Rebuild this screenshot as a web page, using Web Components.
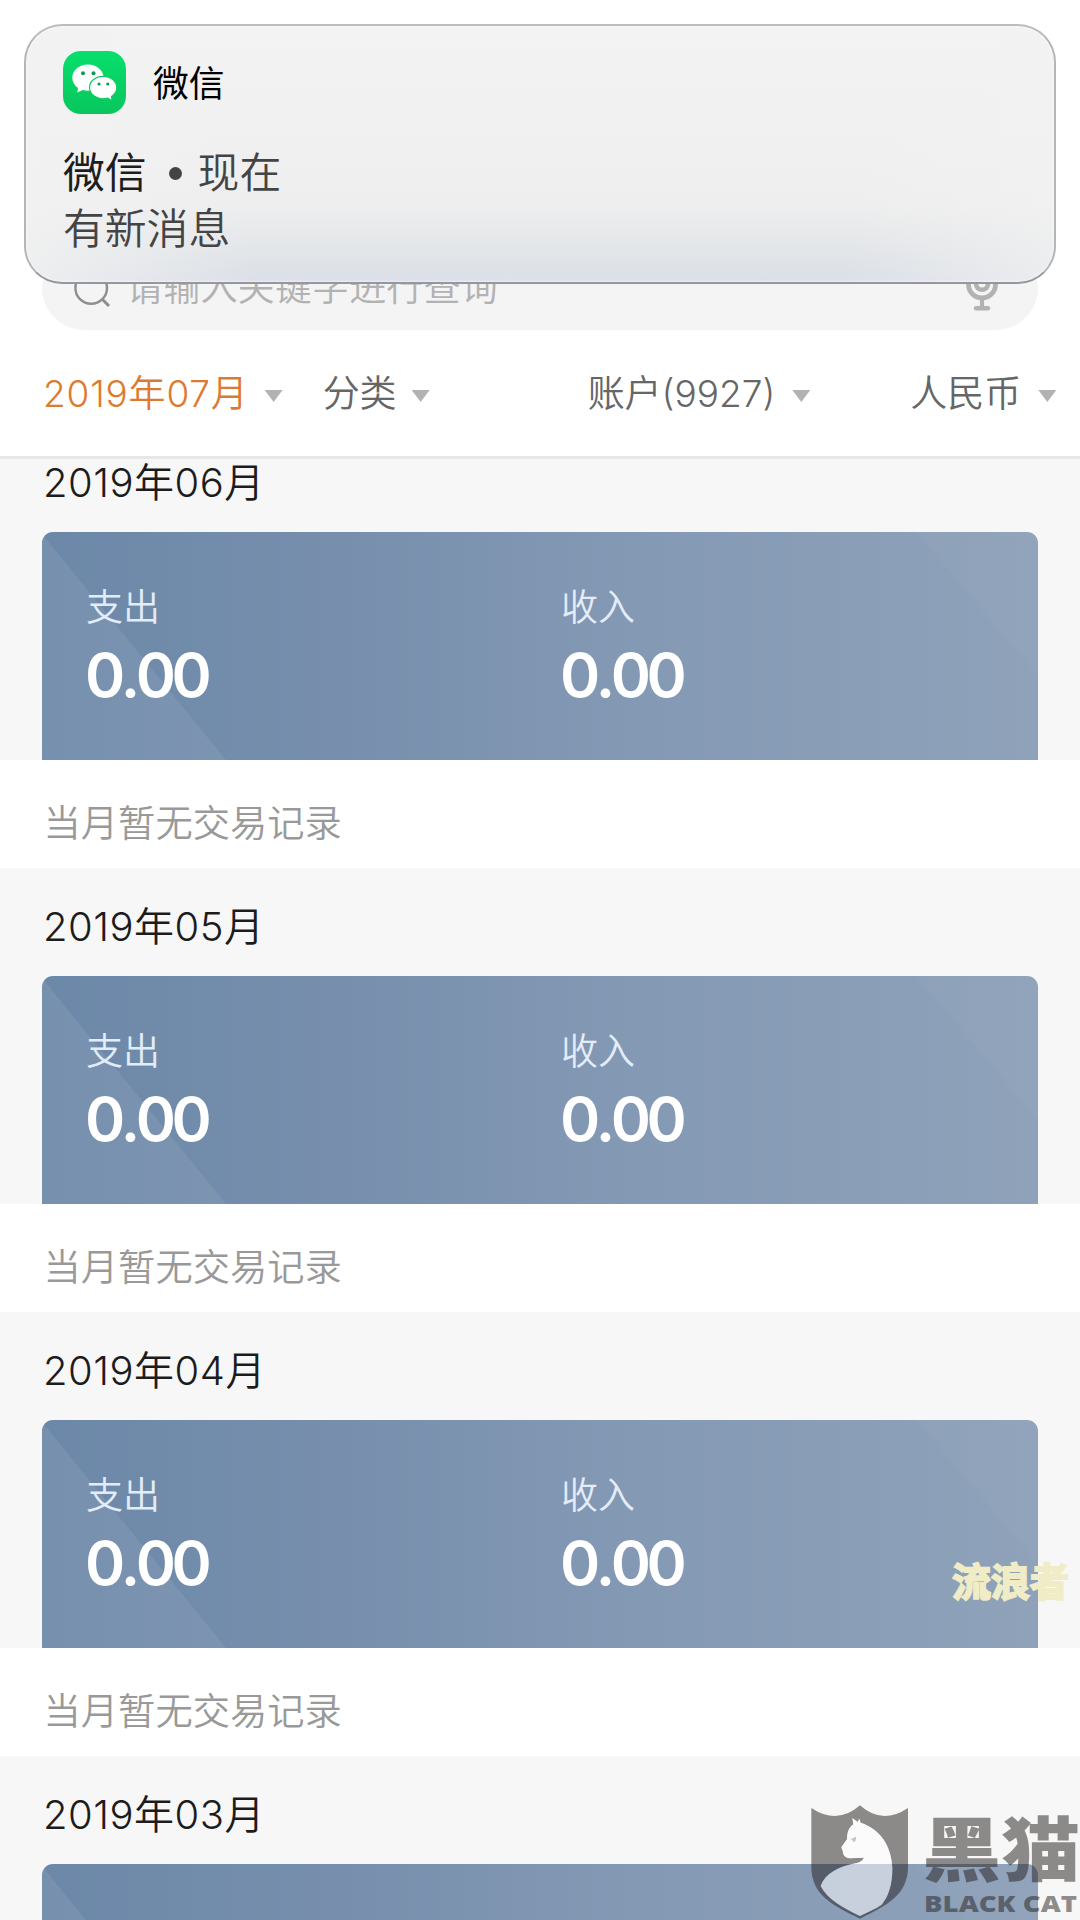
<!DOCTYPE html>
<html lang="zh-CN">
<head>
<meta charset="UTF-8">
<title>交易明细</title>
<style>
  body {
    margin: 0;
    width: 1080px;
    height: 1920px;
    overflow: hidden;
    background: #fff;
    font-family: Inter, "Noto Sans CJK SC", sans-serif;
    font-weight: 350;
  }
</style>
</head>
<body>
<bill-page>
  <search-bar slot="header" placeholder="请输入关键字进行查询"></search-bar>
  <filter-bar slot="header">
    <filter-item active style="margin-left: 43px; --gap: 16px">2019年07月</filter-item>
    <filter-item style="margin-left: 40px; --gap: 15px">分类</filter-item>
    <filter-item style="margin-left: 158px; --gap: 17px">账户(9927)</filter-item>
    <filter-item style="margin-left: 100px; --gap: 17px">人民币</filter-item>
  </filter-bar>
  <month-section first month="2019年06月" expense="0.00" income="0.00"></month-section>
  <month-section month="2019年05月" expense="0.00" income="0.00"></month-section>
  <month-section month="2019年04月" expense="0.00" income="0.00"></month-section>
  <month-section month="2019年03月"></month-section>
</bill-page>
<push-notice app="微信" time="现在">有新消息</push-notice>
<user-mark>流浪者</user-mark>
<black-cat-mark></black-cat-mark>

<script>
class BillPage extends HTMLElement {
  constructor() {
    super();
    this.attachShadow({ mode: 'open' });
    this.shadowRoot.innerHTML = `
      <style>
        :host {
          display: flex;
          flex-direction: column;
          height: 1920px;
          overflow: hidden;
        }
        header {
          flex: none;
          box-sizing: border-box;
          height: 459px;
          padding-top: 246px;
          border-bottom: 3px solid #e6e6e6;
          background: #fff;
        }
        main {
          flex: 1;
          min-height: 0;
          overflow: hidden;
        }
      </style>
      <header><slot name="header"></slot></header>
      <main><slot></slot></main>
    `;
  }
}

class SearchBar extends HTMLElement {
  constructor() {
    super();
    this.attachShadow({ mode: 'open' });
  }

  connectedCallback() {
    this.shadowRoot.innerHTML = `
      <style>
        :host {
          display: flex;
          align-items: center;
          box-sizing: border-box;
          height: 84px;
          margin: 0 42px;
          padding: 0 39px 0 31px;
          border-radius: 42px;
          background: #f4f4f4;
          color: #b2b2b2;
          font-size: 37.2px;
          line-height: 84px;
        }
        span {
          flex: 1;
          margin-left: 15px;
        }
        svg {
          display: block;
        }
      </style>
      <svg width="38" height="38" viewBox="0 0 38 38" fill="none" stroke="#8e8e8e" stroke-width="2.4">
        <circle cx="18.2" cy="19" r="15.800"/>
        <path d="M29.5 30.5L36 37" stroke-width="3"/>
      </svg>
      <span>${this.getAttribute('placeholder')}</span>
      <svg width="34" height="52" viewBox="0 0 34 52" fill="none" stroke="#b2b2b2">
        <rect x="11" y="2" width="12" height="25.800" rx="6" stroke-width="4.600"/>
        <path d="M3.500 18v4.500a13.500 13.500 0 0 0 27 0v-4.500" stroke-width="4.800"/>
        <path d="M17 38v7" stroke-width="4.200"/>
        <path d="M11 46.200h12" stroke-width="4.400" stroke-linecap="round"/>
      </svg>
    `;
  }
}

class FilterBar extends HTMLElement {
  constructor() {
    super();
    this.attachShadow({ mode: 'open' });
    this.shadowRoot.innerHTML = `
      <style>
        :host {
          display: flex;
          align-items: center;
          height: 128px;
        }
      </style>
      <slot></slot>
    `;
  }
}

class FilterItem extends HTMLElement {
  constructor() {
    super();
    this.attachShadow({ mode: 'open' });
    this.shadowRoot.innerHTML = `
      <style>
        :host {
          display: flex;
          flex: none;
          align-items: center;
          gap: var(--gap, 18px);
          color: #666;
          font-size: 37px;
          line-height: 52px;
          white-space: nowrap;
        }
        :host([active]) {
          color: #dd7a32;
          letter-spacing: .8px;
        }
        i {
          width: 18px;
          height: 12px;
          margin-top: 4px;
          background: #b2b2b2;
          clip-path: polygon(0 0, 100% 0, 50% 100%);
        }
      </style>
      <slot></slot><i></i>
    `;
  }
}

class MonthSection extends HTMLElement {
  constructor() {
    super();
    this.attachShadow({ mode: 'open' });
  }

  connectedCallback() {
    this.shadowRoot.innerHTML = `
      <style>
        :host {
          display: block;
          background: #f7f7f7;
        }
        h2 {
          box-sizing: border-box;
          height: 108px;
          margin: 0;
          padding: 29px 0 0 43px;
          color: #1c1c1c;
          font-size: 40px;
          font-weight: inherit;
          letter-spacing: .5px;
          line-height: 60px;
        }
        :host([first]) h2 {
          height: 73px;
          padding-top: 0;
          line-height: 48px;
        }
        .empty {
          height: 108px;
          padding-left: 43.5px;
          background: #fff;
          color: #999;
          font-size: 37.3px;
          line-height: 127px;
        }
      </style>
      <h2>${this.getAttribute('month')}</h2>
      <summary-card>${this.renderCell('支出', 'expense')}${this.renderCell('收入', 'income')}</summary-card>
      ${this.hasAttribute('expense') ? '<div class="empty">当月暂无交易记录</div>' : ''}
    `;
  }

  renderCell(label, name) {
    return this.hasAttribute(name)
      ? `<amount-cell label="${label}">${this.getAttribute(name)}</amount-cell>`
      : '';
  }
}

class SummaryCard extends HTMLElement {
  constructor() {
    super();
    this.attachShadow({ mode: 'open' });
    this.shadowRoot.innerHTML = `
      <style>
        :host {
          display: grid;
          grid-template-columns: 475px 1fr;
          box-sizing: border-box;
          position: relative;
          height: 228px;
          margin: 0 42px;
          padding: 50px 0 0 44px;
          border-radius: 11px 11px 0 0;
          overflow: hidden;
          background: linear-gradient(90deg, #6c88a8 0%, #778fad 30%, #8499b4 60%, #8fa2ba 100%);
        }
        /* faint folded corners behind the figures */
        .fold {
          position: absolute;
          inset: 0;
        }
        ::slotted(*) {
          position: relative;
        }
      </style>
      <svg class="fold" width="996" height="228" viewBox="0 0 996 228">
        <path d="M0 2L184 228H0z" fill="#fff" fill-opacity=".07"/>
        <path d="M874 0L996 144V0z" fill="#fff" fill-opacity=".025"/>
      </svg>
      <slot></slot>
    `;
  }
}

class AmountCell extends HTMLElement {
  constructor() {
    super();
    this.attachShadow({ mode: 'open' });
  }

  connectedCallback() {
    this.shadowRoot.innerHTML = `
      <style>
        :host {
          display: block;
          color: #fff;
        }
        .label {
          color: #e3ecf9;
          font-size: 37px;
          line-height: 52px;
        }
        .value {
          margin: 3px 0 0 -1px;
          font-size: 61px;
          font-weight: 570;
          font-kerning: none;
          letter-spacing: -4.5px;
          line-height: 76px;
        }
      </style>
      <div class="label">${this.getAttribute('label')}</div>
      <div class="value"><slot></slot></div>
    `;
  }
}

class PushNotice extends HTMLElement {
  constructor() {
    super();
    this.attachShadow({ mode: 'open' });
  }

  connectedCallback() {
    const app = this.getAttribute('app');
    this.shadowRoot.innerHTML = `
      <style>
        :host {
          position: absolute;
          left: 24px;
          top: 24px;
          box-sizing: border-box;
          width: 1032px;
          height: 260px;
          padding: 25px 37px;
          border: 2px solid;
          border-color: #bcbcbc #b4b5b7 #94979c;
          border-radius: 38px;
          background:
            linear-gradient(90deg, #f2f2f2cc 0%, #f2f2f200 22%, #f2f2f200 80%, #f2f2f2b0 100%),
            linear-gradient(#f3f3f3 0%, #f0f0f0 50%, #eeeeee 70%, #e5e7ea 84%, #dfe3e7 93%, #dcdfea 100%);
          box-shadow: inset 0 0 3px #fff;
        }
        .app {
          display: flex;
          align-items: center;
          gap: 27px;
          height: 63px;
          color: #000;
          font-size: 35.8px;
          font-weight: 400;
          line-height: 50px;
        }
        .app span {
          margin-top: 2px;
        }
        .title {
          display: flex;
          align-items: center;
          margin-top: 31px;
          color: #444;
          font-size: 41.8px;
          line-height: 56px;
        }
        .title b {
          color: #1d1d1d;
          font-weight: 400;
        }
        .title i {
          width: 13px;
          height: 13px;
          margin: 0 16px 0 22px;
          border-radius: 50%;
          background: #444;
        }
        .text {
          color: #444;
          font-size: 41.8px;
          line-height: 57px;
        }
      </style>
      <div class="app">
        <svg width="63" height="63" viewBox="0 0 63 63">
          <defs>
            <linearGradient id="g" x2="0" y2="1">
              <stop stop-color="#07df6c"/>
              <stop offset="1" stop-color="#08c65d"/>
            </linearGradient>
          </defs>
          <rect width="63" height="63" rx="18" fill="url(#g)"/>
          <path d="M25 13.500c-8.800 0-15.700 5.900-15.700 13.300 0 4.200 2.200 7.800 5.700 10.200l-.7 4.400 5.400-2.500c1.700.5 3.500.8 5.300.8 8.800 0 15.700-5.700 15.700-12.900S33.800 13.500 25 13.500z" fill="#fff"/>
          <circle cx="20" cy="22.300" r="2" fill="#0a9d51"/>
          <circle cx="30.500" cy="22.300" r="2" fill="#0a9d51"/>
          <path d="M40.200 25.300c-7.600 0-13.700 5-13.700 11.300s6.100 11.200 13.700 11.200c1.600 0 3.100-.2 4.500-.6l4.500 2.500-.8-4.200c3.200-2 5.400-5.200 5.400-8.900 0-6.300-6-11.300-13.600-11.300z" fill="#fff" stroke="#09cf64" stroke-width="1.200"/>
          <circle cx="36" cy="33" r="1.600" fill="#0a9d51"/>
          <circle cx="44.800" cy="33" r="1.600" fill="#0a9d51"/>
        </svg>
        <span>${app}</span>
      </div>
      <div class="title"><b>${app}</b><i></i><span>${this.getAttribute('time')}</span></div>
      <div class="text"><slot></slot></div>
    `;
  }
}

class UserMark extends HTMLElement {
  constructor() {
    super();
    this.attachShadow({ mode: 'open' });
    this.shadowRoot.innerHTML = `
      <style>
        :host {
          position: absolute;
          left: 952px;
          top: 1550px;
          color: #efecc6;
          font-family: "Noto Sans CJK SC", sans-serif;
          font-size: 39px;
          font-weight: 700;
          line-height: 58px;
          white-space: nowrap;
          -webkit-text-stroke: 2px #efecc6;
        }
      </style>
      <slot></slot>
    `;
  }
}

class BlackCatMark extends HTMLElement {
  constructor() {
    super();
    this.attachShadow({ mode: 'open' });
    this.shadowRoot.innerHTML = `
      <style>
        :host {
          position: absolute;
          left: 790px;
          top: 1780px;
        }
        svg {
          display: block;
        }
        text {
          font-weight: 900;
        }
      </style>
      <svg width="290" height="140" viewBox="0 0 870 420">
        <g fill="#252020" fill-opacity=".51">
          <path fill-rule="evenodd" d="M64 84Q142 136 210 76Q276 136 354 84V262C353 345 292 376 210 416C126 376 65 345 64 262z
            M187 114L190 133C177 142 171 158 171 178L154 202L158 212Q159 232 178 235L222 233Q217 244 200 249C145 259 104 282 92 318C112 358 160 384 210 408C232 397 258 386 275 374C294 352 308 315 307 262C304 198 272 148 212 128L208 116L203 126z"/>
          <path d="M181 178L198 170Q201 185 188 186Q191 180 181 178z"/>
          <text transform="translate(397 289) scale(1 .92)" font-family="Noto Sans CJK SC, sans-serif" font-size="230" textLength="474" lengthAdjust="spacingAndGlyphs">黑猫</text>
          <text x="402" y="397" font-family="Open Sans, sans-serif" font-size="70" textLength="459" lengthAdjust="spacingAndGlyphs" style="font-weight: 800">BLACK CAT</text>
        </g>
        <path fill="#fff" fill-opacity=".52" d="M187 114L190 133C177 142 171 158 171 178L154 202L158 212Q159 232 178 235L222 233Q217 244 200 249C145 259 104 282 92 318C112 358 160 384 210 408C232 397 258 386 275 374C294 352 308 315 307 262C304 198 272 148 212 128L208 116L203 126z"/>
      </svg>
    `;
  }
}

customElements.define('bill-page', BillPage);
customElements.define('search-bar', SearchBar);
customElements.define('filter-bar', FilterBar);
customElements.define('filter-item', FilterItem);
customElements.define('summary-card', SummaryCard);
customElements.define('amount-cell', AmountCell);
customElements.define('month-section', MonthSection);
customElements.define('push-notice', PushNotice);
customElements.define('user-mark', UserMark);
customElements.define('black-cat-mark', BlackCatMark);
</script>
</body>
</html>
